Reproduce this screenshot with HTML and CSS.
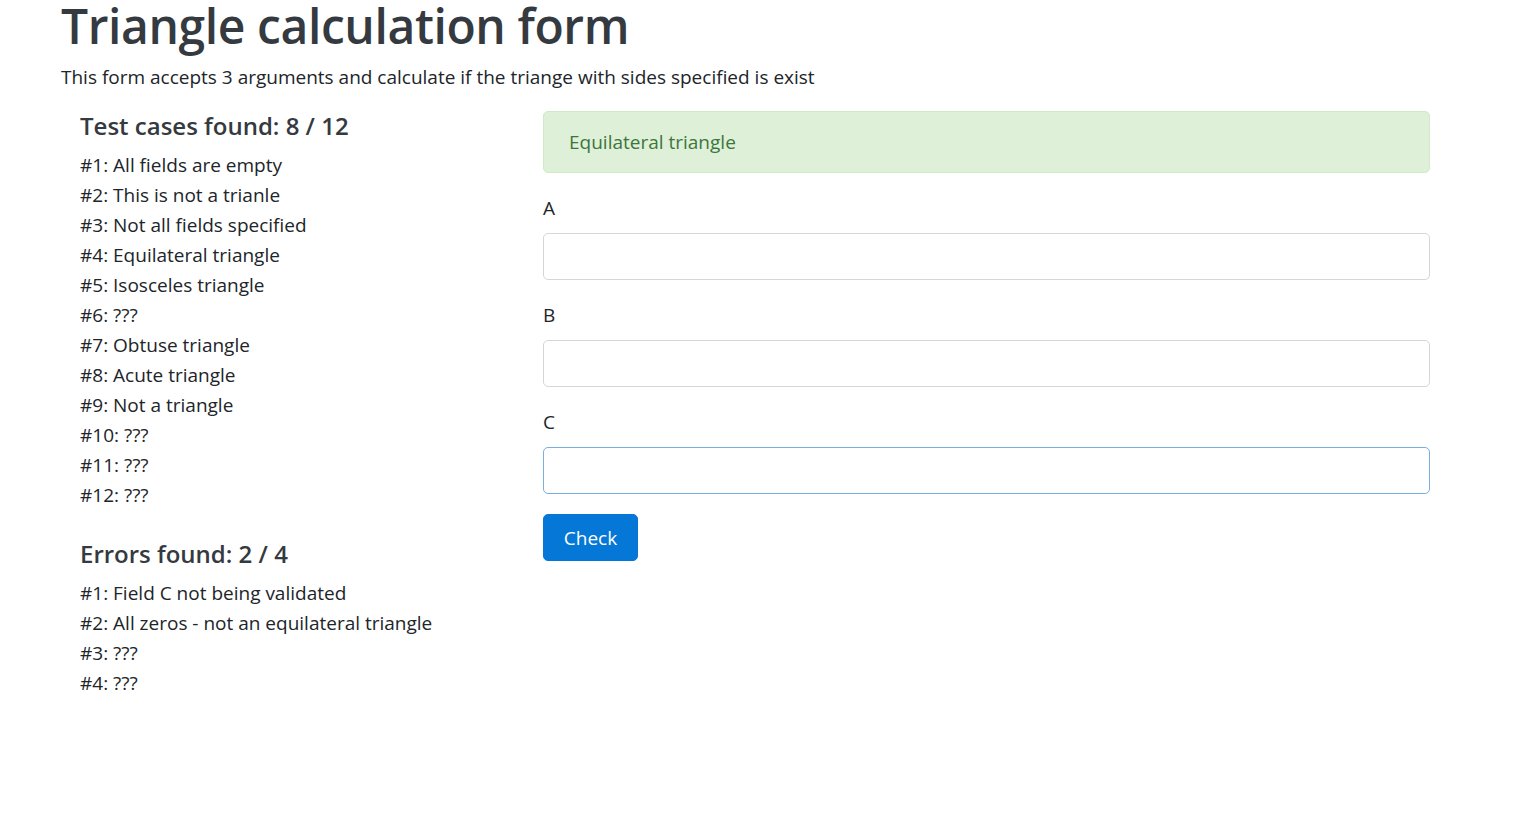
FILE: index.html
```html
<!DOCTYPE html>
<html lang="en">
<head>
<meta charset="utf-8">
<title>Triangle calculation form</title>
<link rel="stylesheet" href="styles.css">
</head>
<body>
<div class="container">
  <h1 class="title">Triangle calculation form</h1>
  <p class="lead">This form accepts 3 arguments and calculate if the triange with sides specified is exist</p>
  <div class="row">
    <div class="side">
      <h4 class="side-title">Test cases found: 8 / 12</h4>
      <ul class="list">
        <li>#1: All fields are empty</li>
        <li>#2: This is not a trianle</li>
        <li>#3: Not all fields specified</li>
        <li>#4: Equilateral triangle</li>
        <li>#5: Isosceles triangle</li>
        <li>#6: ???</li>
        <li>#7: Obtuse triangle</li>
        <li>#8: Acute triangle</li>
        <li>#9: Not a triangle</li>
        <li>#10: ???</li>
        <li>#11: ???</li>
        <li>#12: ???</li>
      </ul>
      <h4 class="side-title">Errors found: 2 / 4</h4>
      <ul class="list">
        <li>#1: Field C not being validated</li>
        <li>#2: All zeros - not an equilateral triangle</li>
        <li>#3: ???</li>
        <li>#4: ???</li>
      </ul>
    </div>
    <form class="main">
      <div class="alert">Equilateral triangle</div>
      <div class="form-group">
        <label class="label" for="a">A</label>
        <input class="input" id="a" type="text">
      </div>
      <div class="form-group">
        <label class="label" for="b">B</label>
        <input class="input" id="b" type="text">
      </div>
      <div class="form-group">
        <label class="label" for="c">C</label>
        <input class="input input-active" id="c" type="text">
      </div>
      <button class="btn" type="button">Check</button>
    </form>
  </div>
</div>
</body>
</html>
```

FILE: styles.css
```css
html { font-size: 20px; }
body {
  margin: 0;
  font-family: "Open Sans", "Noto Sans", sans-serif;
  font-size: 20px;
  line-height: 1.5;
  color: #212529;
  background: #fff;
}
.container {
  padding: 0 100px 0 60px;
}
.title {
  margin: 0 0 10px 1px;
  font-size: 48px;
  font-weight: 600;
  line-height: 52px;
  color: #343a40;
  letter-spacing: -0.4px;
}
.lead {
  margin: 0 0 19px 1px;
  font-size: 19px;
  line-height: 30px;
  font-weight: 400;
  color: #212529;
}
.row {
  display: flex;
}
.side {
  width: 463px;
  padding-left: 20px;
  flex: none;
}
.side-title {
  margin: 0 0 10px;
  font-size: 24px;
  font-weight: 600;
  line-height: 29px;
  color: #343a40;
}
.list {
  list-style: none;
  margin: 0 0 29px;
  padding: 0;
  font-size: 19px;
  line-height: 30px;
}
.main {
  flex: 1;
}
.alert {
  padding: 15px 25px;
  margin-bottom: 20px;
  border: 1px solid #d0e9c6;
  border-radius: 5px;
  background: #dff0d8;
  color: #3c763d;
  line-height: 30px;
  font-size: 19px;
}
.form-group {
  margin-bottom: 20px;
}
.label {
  display: block;
  margin-bottom: 10px;
  line-height: 30px;
  font-size: 19px;
}
.input {
  display: block;
  box-sizing: border-box;
  width: 100%;
  height: 47px;
  padding: 7px 15px;
  border: 1px solid #d6d6d6;
  border-radius: 5px;
  font: inherit;
  background: #fff;
}
.input-active {
  border-color: #7aaee0;
}
.btn {
  display: inline-block;
  height: 47px;
  width: 95px;
  padding: 0 15px;
  border: 1px solid #0477d7;
  border-radius: 5px;
  background: #0477d7;
  color: #fff;
  font-family: inherit;
  font-size: 19px;
  line-height: 30px;
  cursor: pointer;
}
```
